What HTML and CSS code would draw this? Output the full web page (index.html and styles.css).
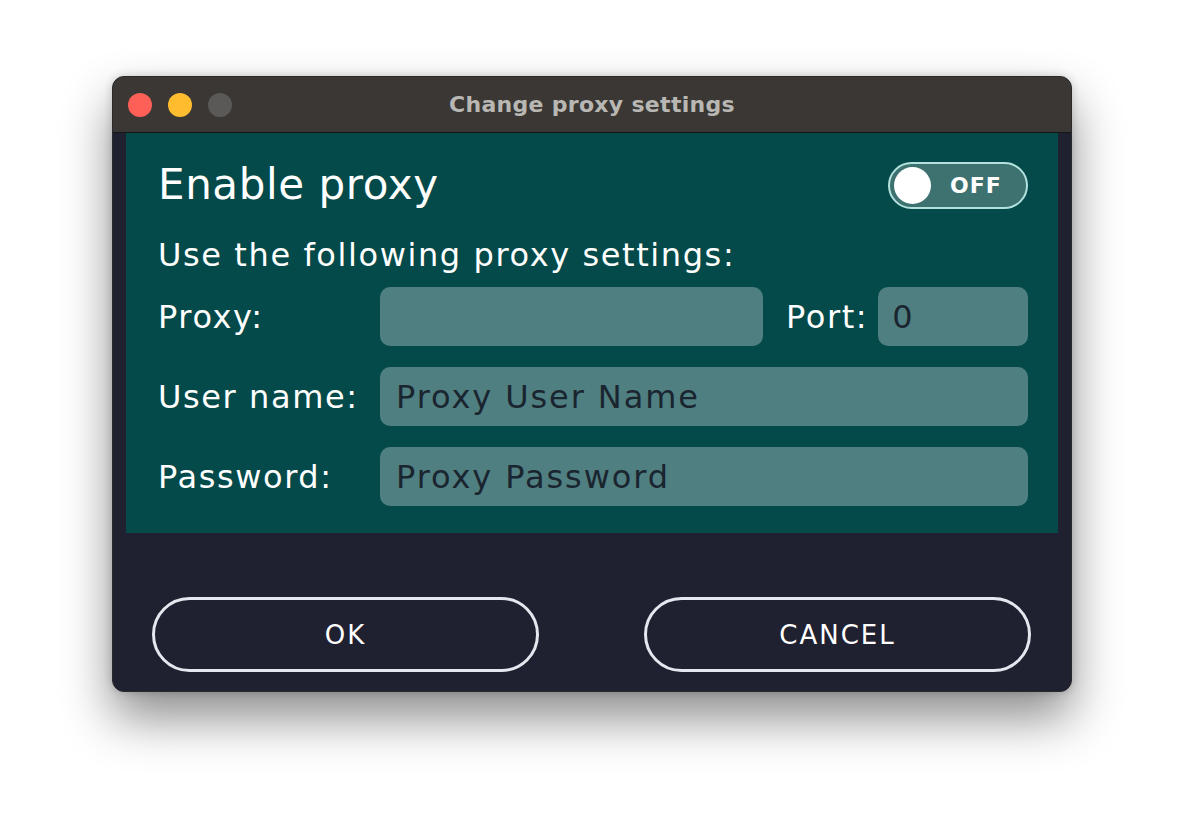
FILE: index.html
```html
<!DOCTYPE html>
<html>
<head>
<meta charset="utf-8">
<link rel="stylesheet" href="styles.css">
</head>
<body>
<div class="window">
  <div class="titlebar">
    <div class="lights">
      <span class="light red"></span>
      <span class="light yellow"></span>
      <span class="light gray"></span>
    </div>
    <div class="title">Change proxy settings</div>
  </div>
  <div class="body">
    <div class="panel">
      <div class="head-row">
        <div class="heading">Enable proxy</div>
        <div class="toggle"><span class="knob"></span><span class="toggle-text">OFF</span></div>
      </div>
      <div class="subheading">Use the following proxy settings:</div>
      <div class="form">
        <div class="label">Proxy:</div>
        <div class="proxy-line">
          <div class="input proxy-input"></div>
          <div class="label port-label">Port:</div>
          <div class="input port-input">0</div>
        </div>
        <div class="label">User name:</div>
        <div class="input">Proxy User Name</div>
        <div class="label">Password:</div>
        <div class="input">Proxy Password</div>
      </div>
    </div>
    <div class="buttons">
      <div class="btn">OK</div>
      <div class="btn">CANCEL</div>
    </div>
  </div>
</div>
</body>
</html>
```
FILE: styles.css
```css
html, body {
  margin: 0;
  padding: 0;
  background: #ffffff;
}
body {
  min-height: 840px;
  box-sizing: border-box;
  display: flex;
  justify-content: center;
  align-items: flex-start;
  padding-top: 76px;
  font-family: "DejaVu Sans", "Liberation Sans", sans-serif;
}
.window {
  width: 960px;
  height: 616px;
  box-sizing: border-box;
  border: 1px solid #2b2a2a;
  border-radius: 12px;
  overflow: hidden;
  background: #1f2131;
  box-shadow: 0 26px 50px rgba(0, 0, 0, 0.45), 0 0 10px rgba(0, 0, 0, 0.18);
  display: flex;
  flex-direction: column;
}
.titlebar {
  height: 56px;
  flex: none;
  box-sizing: border-box;
  background: #3a3734;
  border-bottom: 1px solid #161515;
  display: flex;
  align-items: center;
  position: relative;
}
.lights {
  display: flex;
  gap: 16px;
  padding-left: 15px;
}
.light {
  width: 24px;
  height: 24px;
  border-radius: 50%;
  display: block;
}
.red { background: #fe5f57; }
.yellow { background: #febc2e; }
.gray { background: #5b5957; }
.title {
  position: absolute;
  left: 0;
  right: 0;
  text-align: center;
  font-family: "DejaVu Sans", sans-serif;
  font-weight: bold;
  font-size: 22px;
  letter-spacing: 0.3px;
  color: #b9b7b4;
  pointer-events: none;
}
.body {
  flex: 1;
  padding: 0 13px;
  display: flex;
  flex-direction: column;
}
.panel {
  background: #054a4a;
  padding: 29px 30px 27px 32px;
  color: #ffffff;
}
.head-row {
  display: flex;
  justify-content: space-between;
  align-items: center;
  height: 47px;
}
.heading {
  font-size: 42px;
  letter-spacing: 0.6px;
  margin-top: -3px;
}
.toggle {
  width: 140px;
  height: 47px;
  box-sizing: border-box;
  border: 2px solid #b3e2de;
  border-radius: 24px;
  background: #3d7270;
  display: flex;
  align-items: center;
  padding-left: 4px;
}
.knob {
  width: 37px;
  height: 37px;
  border-radius: 50%;
  background: #ffffff;
  display: block;
}
.toggle-text {
  font-weight: bold;
  font-size: 22px;
  letter-spacing: 1px;
  margin-left: 19px;
  color: #ffffff;
}
.subheading {
  font-size: 32px;
  letter-spacing: 1.6px;
  margin-top: 28px;
  height: 36px;
  line-height: 36px;
}
.form {
  margin-top: 14px;
  display: grid;
  grid-template-columns: 222px 1fr;
  row-gap: 21px;
  align-items: center;
}
.label {
  font-size: 32px;
  letter-spacing: 1.6px;
  color: #ffffff;
}
.proxy-line {
  display: flex;
  align-items: center;
}
.input {
  height: 59px;
  box-sizing: border-box;
  background: #4f7f80;
  border-radius: 10px;
  padding-left: 16px;
  display: flex;
  align-items: center;
  font-size: 32px;
  letter-spacing: 1.9px;
  color: #1a2530;
}
.proxy-input {
  width: 383px;
}
.port-label {
  margin-left: 23px;
  margin-right: 10px;
}
.port-input {
  flex: 1;
  padding-left: 14px;
}
.buttons {
  display: flex;
  justify-content: space-between;
  padding: 64px 27px 0 26px;
}
.btn {
  width: 387px;
  height: 75px;
  box-sizing: border-box;
  border: 3px solid #e5e7ee;
  border-radius: 38px;
  display: flex;
  align-items: center;
  justify-content: center;
  color: #ffffff;
  font-size: 26px;
  letter-spacing: 2px;
}
```
